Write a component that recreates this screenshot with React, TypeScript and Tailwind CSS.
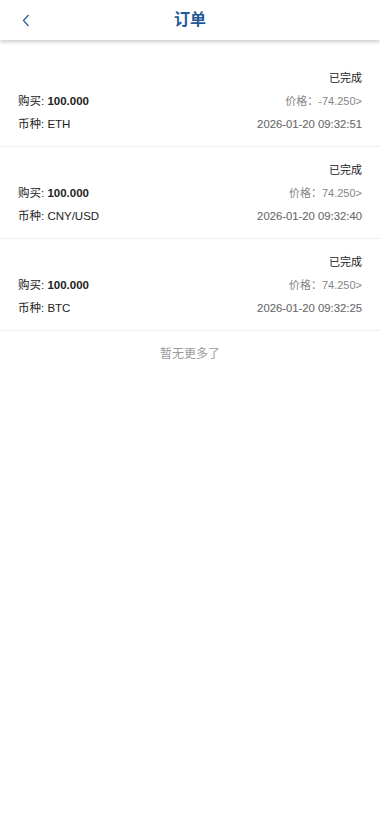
import React from "react";

type Order = {
  coin: string;
  amount: string;
  price: string;
  time: string;
};

const ORDERS: Order[] = [
  { coin: "ETH", amount: "100.000", price: "-74.250", time: "2026-01-20 09:32:51" },
  { coin: "CNY/USD", amount: "100.000", price: "74.250", time: "2026-01-20 09:32:40" },
  { coin: "BTC", amount: "100.000", price: "74.250", time: "2026-01-20 09:32:25" },
];

const font = { fontFamily: '"Liberation Sans", Arial, "Noto Sans CJK SC", sans-serif' };

export default function App() {
  return (
    <div className="min-h-screen w-full bg-white" style={font}>
      {/* Header */}
      <div className="relative flex h-10 items-center justify-center bg-white shadow-[0_2px_4px_rgba(0,0,0,0.2)]">
        <button className="absolute left-[14px] top-0 flex h-10 w-6 items-center justify-center">
          <svg width="8" height="13" viewBox="0 0 8 13" fill="none">
            <path d="M6.5 1 L1.5 6.5 L6.5 12" stroke="#2a5f96" strokeWidth="1.3" />
          </svg>
        </button>
        <h1 className="text-[16px] font-semibold text-[#1f5a96]">订单</h1>
      </div>

      {/* Orders */}
      <div className="mt-[15px]">
        {ORDERS.map((o, i) => (
          <div key={i} className="border-b border-[#efefef] px-[18px] pb-[10px] pt-3">
            <div className="flex h-[23px] items-center justify-end text-[11px] text-[#222]">
              已完成
            </div>
            <div className="flex h-[23px] items-center justify-between">
              <span className="text-[11.5px] text-[#222]">
                购买: <span className="font-bold">{o.amount}</span>
              </span>
              <span className="text-[11px] text-[#858585]">价格：{o.price}&gt;</span>
            </div>
            <div className="flex h-[23px] items-center justify-between">
              <span className="text-[11.5px] text-[#222]">币种: {o.coin}</span>
              <span className="text-[11.3px] text-[#6a6a6a] [-webkit-text-stroke:0.1px_#6a6a6a]">{o.time}</span>
            </div>
          </div>
        ))}
      </div>

      <div className="pt-[14px] text-center text-[12px] text-[#9a9a9a]">暂无更多了</div>
    </div>
  );
}
